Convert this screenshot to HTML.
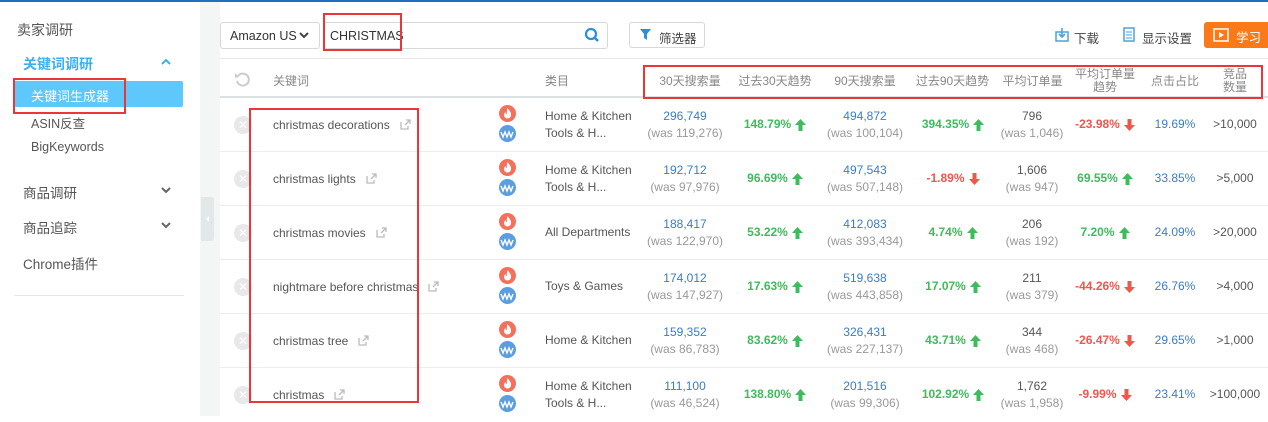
<!DOCTYPE html>
<html><head><meta charset="utf-8"><style>
*{box-sizing:border-box;margin:0;padding:0}
body{width:1268px;height:416px;overflow:hidden;background:#fff;font-family:"Liberation Sans","Noto Sans CJK SC",sans-serif;font-size:12px;color:#555;position:relative}
.a{position:absolute}
.top{left:0;top:0;width:1268px;height:2px;background:#1d6fc2}
.gap{left:200px;top:2px;width:20px;height:414px;background:#f4f5f5}
.tab{left:201px;top:197px;width:13px;height:44px;background:#e2e7e7;border-radius:0 3px 3px 0}
.side{font-size:14px;color:#555}
.red{border:2px solid #e8363a}
.hdr{top:58px;left:220px;width:1048px;height:40px;border-top:1px solid #e6e6e6;border-bottom:2px solid #dde1e6}
.h{top:66px;height:30px;display:flex;align-items:center;justify-content:center;text-align:center;color:#888;font-size:12px;line-height:13px;white-space:nowrap}
.row{left:220px;width:1048px;height:54px;border-bottom:1px solid #ececec}
.c{position:absolute;top:0;height:53px;display:flex;flex-direction:column;justify-content:center;align-items:center;text-align:center;line-height:17px;font-size:12px;white-space:nowrap}
.c span{display:flex;align-items:center}
.c svg{margin-left:4px}
.b{color:#3a7cc4}.w{color:#999}.g{color:#3fba5c;font-weight:bold}.r{color:#f0564b;font-weight:bold}
.x{position:absolute;left:14px;top:18px;width:18px;height:18px;border-radius:50%;background:#e8e8e8;color:#fff;font-size:12px;line-height:18px;text-align:center}
.kw{position:absolute;left:53px;top:0;height:53px;display:flex;align-items:center;font-size:12px;color:#555;white-space:nowrap}
.kw svg{margin-left:10px}
.ic{position:absolute;left:279px;top:7px;width:18px}
.ic svg{display:block;margin-bottom:3px}
.cat{position:absolute;left:325px;top:0;height:53px;display:flex;flex-direction:column;justify-content:center;line-height:17px;font-size:12px;color:#555;white-space:nowrap}
</style></head><body>
<svg width="0" height="0" style="position:absolute"><defs>
<g id="up"><path d="M5.5 0 L11 6 H7.5 V12 H3.5 V6 H0Z" fill="#3fba5c"/></g>
<g id="dn"><path d="M5.5 12 L11 6 H7.5 V0 H3.5 V6 H0Z" fill="#f0564b"/></g>
<g id="ext"><path d="M1 3 V10 H8 V7 M5 6 L10 1 M6 1 H10 V5" stroke="#bbb" stroke-width="1.3" fill="none"/></g>
<g id="fire"><circle cx="8.5" cy="8.5" r="8.5" fill="#f4705a"/><path d="M8.5 3 C11 6 12.5 8 12 10.5 C11.5 13 9.5 13.5 8.5 13.5 C6.5 13.5 5 12 5 10 C5 8.5 6 7.5 6.5 7 C6.5 8.5 7.5 9 8 9 C7.5 7 8 5 8.5 3Z" fill="#fff"/></g>
<g id="wv"><circle cx="8.5" cy="8.5" r="8.5" fill="#5b9ee0"/><path d="M2 7 L4 12 L6 7 L8 12 L10 7 L12 12 L14 7" stroke="#fff" stroke-width="1.4" fill="none"/></g>
</defs></svg>
<div class="a top"></div>
<div class="a gap"></div>
<div class="a tab"><svg width="13" height="44"><path d="M8 19 L5 22 L8 25Z" fill="#fff"/></svg></div>
<div class="a side" style="left:17px;top:20px">卖家调研</div>
<div class="a side" style="left:23px;top:54px;color:#3ab0f0;font-weight:bold">关键词调研</div>
<svg class="a" style="left:160px;top:58px" width="12" height="8"><path d="M2 6 L6 2 L10 6" stroke="#3ab0f0" stroke-width="2" fill="none"/></svg>
<div class="a" style="left:14px;top:81px;width:169px;height:26px;background:#5ec7fb;border-radius:2px"></div>
<div class="a" style="left:31px;top:86px;color:#fff;font-size:13px">关键词生成器</div>
<div class="a red" style="left:13px;top:78px;width:113px;height:36px"></div>
<div class="a" style="left:31px;top:113px;font-size:12.5px">ASIN反查</div>
<div class="a" style="left:31px;top:140px;font-size:12.5px">BigKeywords</div>
<div class="a side" style="left:23px;top:182px;font-size:13.5px">商品调研</div>
<svg class="a" style="left:160px;top:186px" width="12" height="8"><path d="M2 2 L6 6 L10 2" stroke="#666" stroke-width="2" fill="none"/></svg>
<div class="a side" style="left:23px;top:217px;font-size:13.5px">商品追踪</div>
<svg class="a" style="left:160px;top:221px" width="12" height="8"><path d="M2 2 L6 6 L10 2" stroke="#666" stroke-width="2" fill="none"/></svg>
<div class="a side" style="left:23px;top:253px;font-size:13.5px">Chrome插件</div>
<div class="a" style="left:14px;top:295px;width:170px;height:1px;background:#e6e6e6"></div>

<div class="a" style="left:220px;top:22px;width:100px;height:27px;border:1px solid #d8d8d8;border-radius:3px;font-size:12.5px;color:#333;padding:6px 9px">Amazon US</div>
<svg class="a" style="left:299px;top:32px" width="10" height="7"><path d="M1 1 L5 5 L9 1" stroke="#444" stroke-width="2" fill="none"/></svg>
<div class="a" style="left:323px;top:22px;width:285px;height:27px;border:1px solid #d8d8d8;border-radius:3px;font-size:12.5px;color:#333;padding:6px 6px">CHRISTMAS</div>
<svg class="a" style="left:584px;top:27px" width="16" height="17"><circle cx="7" cy="7" r="5" stroke="#2e8fd6" stroke-width="2.2" fill="none"/><path d="M10.5 10.5 L14 14" stroke="#2e8fd6" stroke-width="2.6"/></svg>
<div class="a red" style="left:323px;top:13px;width:79px;height:38px"></div>
<div class="a" style="left:629px;top:22px;width:76px;height:26px;border:1px solid #d8d8d8;border-radius:3px;font-size:12.5px;color:#444;padding:5px 0 0 29px">筛选器</div>
<svg class="a" style="left:640px;top:29px" width="11" height="12"><path d="M0 0 H11 L7 5 V11 L4 9 V5Z" fill="#2e8fd6"/></svg>
<svg class="a" style="left:1055px;top:28px" width="14" height="14"><rect x="1" y="4" width="12" height="9" fill="none" stroke="#4aa2e0" stroke-width="1.5"/><path d="M7 0 V9 M4 6 L7 9 L10 6" stroke="#4aa2e0" stroke-width="1.6" fill="none"/></svg>
<div class="a" style="left:1074px;top:28px;font-size:12.5px;color:#444">下载</div>
<svg class="a" style="left:1123px;top:27px" width="12" height="15"><rect x="1" y="1" width="10" height="13" fill="none" stroke="#4aa2e0" stroke-width="1.5"/><path d="M3 5 H9 M3 8 H9 M3 11 H9" stroke="#4aa2e0"/></svg>
<div class="a" style="left:1142px;top:28px;font-size:12.5px;color:#444">显示设置</div>
<div class="a" style="left:1204px;top:22px;width:64px;height:26px;background:#fb7a17;border-radius:3px 0 0 3px"></div>
<svg class="a" style="left:1213px;top:28px" width="16" height="14"><rect x="1" y="1" width="14" height="12" fill="none" stroke="#fff" stroke-width="1.5"/><path d="M6 4 L11 7 L6 10Z" fill="#fff"/></svg>
<div class="a" style="left:1236px;top:27px;font-size:12.5px;color:#fff">学习</div>

<div class="a hdr"></div>
<svg class="a" style="left:234px;top:71px" width="16" height="16"><path d="M4 5 A6 6 0 1 1 3 10" stroke="#ccc" stroke-width="2" fill="none"/><path d="M1 2 L5 6 L1 7Z" fill="#ccc"/></svg>
<div class="a h" style="left:273px;justify-content:flex-start">关键词</div>
<div class="a h" style="left:545px;justify-content:flex-start">类目</div>
<div class="a h" style="left:650px;width:80px">30天搜索量</div>
<div class="a h" style="left:735px;width:80px">过去30天趋势</div>
<div class="a h" style="left:825px;width:80px">90天搜索量</div>
<div class="a h" style="left:910px;width:85px">过去90天趋势</div>
<div class="a h" style="left:995px;width:75px">平均订单量</div>
<div class="a h" style="left:1070px;width:70px">平均订单量<br>趋势</div>
<div class="a h" style="left:1140px;width:70px">点击占比</div>
<div class="a h" style="left:1210px;width:50px">竞品<br>数量</div>
<div class="a red" style="left:643px;top:65px;width:620px;height:34px"></div>

<div class="a row" style="top:98px">
<div class="x">✕</div><div class="kw">christmas decorations<svg width="11" height="11"><use href="#ext"/></svg></div>
<div class="ic"><svg width="17" height="17"><use href="#fire"/></svg><svg width="17" height="17"><use href="#wv"/></svg></div>
<div class="cat"><span>Home &amp; Kitchen</span><span>Tools &amp; H...</span></div>
<div class="c" style="left:420px;width:90px"><span class="b">296,749</span><span class="w">(was 119,276)</span></div>
<div class="c" style="left:510px;width:90px"><span class="g">148.79%<svg width="11" height="12"><use href="#up"/></svg></span></div>
<div class="c" style="left:600px;width:90px"><span class="b">494,872</span><span class="w">(was 100,104)</span></div>
<div class="c" style="left:688px;width:90px"><span class="g">394.35%<svg width="11" height="12"><use href="#up"/></svg></span></div>
<div class="c" style="left:772px;width:80px"><span>796</span><span class="w">(was 1,046)</span></div>
<div class="c" style="left:845px;width:80px"><span class="r">-23.98%<svg width="11" height="12"><use href="#dn"/></svg></span></div>
<div class="c" style="left:920px;width:70px"><span class="b">19.69%</span></div>
<div class="c" style="left:985px;width:60px"><span>&gt;10,000</span></div>
</div>
<div class="a row" style="top:152px">
<div class="x">✕</div><div class="kw">christmas lights<svg width="11" height="11"><use href="#ext"/></svg></div>
<div class="ic"><svg width="17" height="17"><use href="#fire"/></svg><svg width="17" height="17"><use href="#wv"/></svg></div>
<div class="cat"><span>Home &amp; Kitchen</span><span>Tools &amp; H...</span></div>
<div class="c" style="left:420px;width:90px"><span class="b">192,712</span><span class="w">(was 97,976)</span></div>
<div class="c" style="left:510px;width:90px"><span class="g">96.69%<svg width="11" height="12"><use href="#up"/></svg></span></div>
<div class="c" style="left:600px;width:90px"><span class="b">497,543</span><span class="w">(was 507,148)</span></div>
<div class="c" style="left:688px;width:90px"><span class="r">-1.89%<svg width="11" height="12"><use href="#dn"/></svg></span></div>
<div class="c" style="left:772px;width:80px"><span>1,606</span><span class="w">(was 947)</span></div>
<div class="c" style="left:845px;width:80px"><span class="g">69.55%<svg width="11" height="12"><use href="#up"/></svg></span></div>
<div class="c" style="left:920px;width:70px"><span class="b">33.85%</span></div>
<div class="c" style="left:985px;width:60px"><span>&gt;5,000</span></div>
</div>
<div class="a row" style="top:206px">
<div class="x">✕</div><div class="kw">christmas movies<svg width="11" height="11"><use href="#ext"/></svg></div>
<div class="ic"><svg width="17" height="17"><use href="#fire"/></svg><svg width="17" height="17"><use href="#wv"/></svg></div>
<div class="cat"><span>All Departments</span></div>
<div class="c" style="left:420px;width:90px"><span class="b">188,417</span><span class="w">(was 122,970)</span></div>
<div class="c" style="left:510px;width:90px"><span class="g">53.22%<svg width="11" height="12"><use href="#up"/></svg></span></div>
<div class="c" style="left:600px;width:90px"><span class="b">412,083</span><span class="w">(was 393,434)</span></div>
<div class="c" style="left:688px;width:90px"><span class="g">4.74%<svg width="11" height="12"><use href="#up"/></svg></span></div>
<div class="c" style="left:772px;width:80px"><span>206</span><span class="w">(was 192)</span></div>
<div class="c" style="left:845px;width:80px"><span class="g">7.20%<svg width="11" height="12"><use href="#up"/></svg></span></div>
<div class="c" style="left:920px;width:70px"><span class="b">24.09%</span></div>
<div class="c" style="left:985px;width:60px"><span>&gt;20,000</span></div>
</div>
<div class="a row" style="top:260px">
<div class="x">✕</div><div class="kw">nightmare before christmas<svg width="11" height="11"><use href="#ext"/></svg></div>
<div class="ic"><svg width="17" height="17"><use href="#fire"/></svg><svg width="17" height="17"><use href="#wv"/></svg></div>
<div class="cat"><span>Toys &amp; Games</span></div>
<div class="c" style="left:420px;width:90px"><span class="b">174,012</span><span class="w">(was 147,927)</span></div>
<div class="c" style="left:510px;width:90px"><span class="g">17.63%<svg width="11" height="12"><use href="#up"/></svg></span></div>
<div class="c" style="left:600px;width:90px"><span class="b">519,638</span><span class="w">(was 443,858)</span></div>
<div class="c" style="left:688px;width:90px"><span class="g">17.07%<svg width="11" height="12"><use href="#up"/></svg></span></div>
<div class="c" style="left:772px;width:80px"><span>211</span><span class="w">(was 379)</span></div>
<div class="c" style="left:845px;width:80px"><span class="r">-44.26%<svg width="11" height="12"><use href="#dn"/></svg></span></div>
<div class="c" style="left:920px;width:70px"><span class="b">26.76%</span></div>
<div class="c" style="left:985px;width:60px"><span>&gt;4,000</span></div>
</div>
<div class="a row" style="top:314px">
<div class="x">✕</div><div class="kw">christmas tree<svg width="11" height="11"><use href="#ext"/></svg></div>
<div class="ic"><svg width="17" height="17"><use href="#fire"/></svg><svg width="17" height="17"><use href="#wv"/></svg></div>
<div class="cat"><span>Home &amp; Kitchen</span></div>
<div class="c" style="left:420px;width:90px"><span class="b">159,352</span><span class="w">(was 86,783)</span></div>
<div class="c" style="left:510px;width:90px"><span class="g">83.62%<svg width="11" height="12"><use href="#up"/></svg></span></div>
<div class="c" style="left:600px;width:90px"><span class="b">326,431</span><span class="w">(was 227,137)</span></div>
<div class="c" style="left:688px;width:90px"><span class="g">43.71%<svg width="11" height="12"><use href="#up"/></svg></span></div>
<div class="c" style="left:772px;width:80px"><span>344</span><span class="w">(was 468)</span></div>
<div class="c" style="left:845px;width:80px"><span class="r">-26.47%<svg width="11" height="12"><use href="#dn"/></svg></span></div>
<div class="c" style="left:920px;width:70px"><span class="b">29.65%</span></div>
<div class="c" style="left:985px;width:60px"><span>&gt;1,000</span></div>
</div>
<div class="a row" style="top:368px;border:none">
<div class="x">✕</div><div class="kw">christmas<svg width="11" height="11"><use href="#ext"/></svg></div>
<div class="ic"><svg width="17" height="17"><use href="#fire"/></svg><svg width="17" height="17"><use href="#wv"/></svg></div>
<div class="cat"><span>Home &amp; Kitchen</span><span>Tools &amp; H...</span></div>
<div class="c" style="left:420px;width:90px"><span class="b">111,100</span><span class="w">(was 46,524)</span></div>
<div class="c" style="left:510px;width:90px"><span class="g">138.80%<svg width="11" height="12"><use href="#up"/></svg></span></div>
<div class="c" style="left:600px;width:90px"><span class="b">201,516</span><span class="w">(was 99,306)</span></div>
<div class="c" style="left:688px;width:90px"><span class="g">102.92%<svg width="11" height="12"><use href="#up"/></svg></span></div>
<div class="c" style="left:772px;width:80px"><span>1,762</span><span class="w">(was 1,958)</span></div>
<div class="c" style="left:845px;width:80px"><span class="r">-9.99%<svg width="11" height="12"><use href="#dn"/></svg></span></div>
<div class="c" style="left:920px;width:70px"><span class="b">23.41%</span></div>
<div class="c" style="left:985px;width:60px"><span>&gt;100,000</span></div>
</div>
<div class="a red" style="left:249px;top:108px;width:170px;height:295px"></div>
</body></html>
